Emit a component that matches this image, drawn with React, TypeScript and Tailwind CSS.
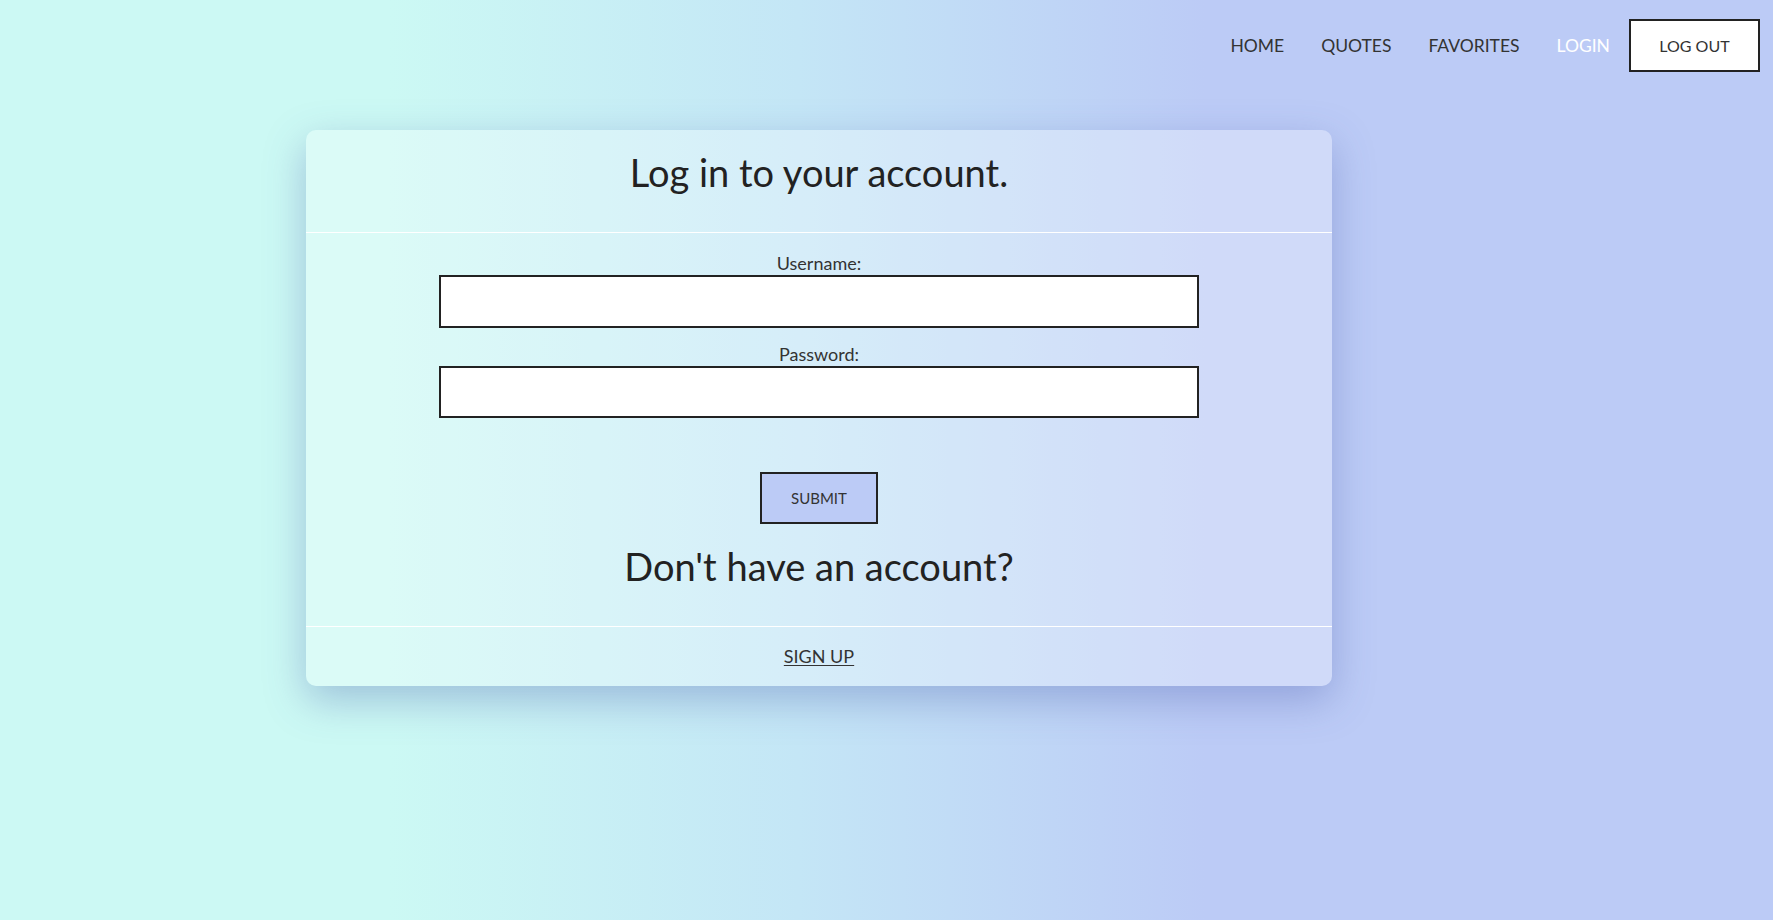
import { useState } from "react";

const NAV_LINKS = [
  { name: "HOME", active: false },
  { name: "QUOTES", active: false },
  { name: "FAVORITES", active: false },
  { name: "LOGIN", active: true },
];

export default function App() {
  const [username, setUsername] = useState("");
  const [password, setPassword] = useState("");

  return (
    <div className="min-h-[920px] w-full bg-[linear-gradient(to_right,#ccf9f4_22%,#c4e6f6_45%,#bccbf6_68%)] font-['Lato',sans-serif] text-[#222]">
      <nav className="flex items-center justify-end pt-[19px] pr-[13px]">
        <ul className="flex items-center gap-[37px]">
          {NAV_LINKS.map((link) => (
            <li key={link.name}>
              <a
                href="#"
                className={`text-[17.5px] leading-6 ${link.active ? "text-white" : "text-[#333]"}`}
              >
                {link.name}
              </a>
            </li>
          ))}
        </ul>
        <button className="ml-[19px] h-[53px] w-[131px] border-2 border-[#222] bg-white text-[16px] text-[#333]">
          LOG OUT
        </button>
      </nav>

      <div className="ml-[306px] mt-[58px] w-[1026px] rounded-[10px] bg-white/30 shadow-[0_14px_40px_rgba(70,90,170,0.35)]">
        <div className="h-[103px] border-b border-white pt-[20px] text-center">
          <h2 className="text-[38px] leading-[44px] text-[#222]">Log in to your account.</h2>
        </div>

        <form
          className="flex flex-col items-center pt-[18px] pb-[38px]"
          onSubmit={(e) => e.preventDefault()}
        >
          <label htmlFor="username" className="text-[18px] leading-6 text-[#333]">
            Username:
          </label>
          <input
            id="username"
            value={username}
            onChange={(e) => setUsername(e.target.value)}
            className="h-[53px] w-[760px] border-2 border-[#222] bg-white px-3 outline-none"
          />
          <label htmlFor="password" className="mt-[14px] text-[18px] leading-6 text-[#333]">
            Password:
          </label>
          <input
            id="password"
            type="password"
            value={password}
            onChange={(e) => setPassword(e.target.value)}
            className="h-[52px] w-[760px] border-2 border-[#222] bg-white px-3 outline-none"
          />
          <button
            type="submit"
            className="mt-[54px] h-[52px] w-[118px] border-2 border-[#222] bg-[#bccbf6] text-[15px] text-[#333]"
          >
            SUBMIT
          </button>
          <h2 className="mt-[20px] text-[38px] leading-[44px] text-[#222]">Don't have an account?</h2>
        </form>

        <div className="flex h-[60px] items-center justify-center border-t border-white">
          <a href="#" className="text-[18px] text-[#333] underline underline-offset-2">
            SIGN UP
          </a>
        </div>
      </div>
    </div>
  );
}
